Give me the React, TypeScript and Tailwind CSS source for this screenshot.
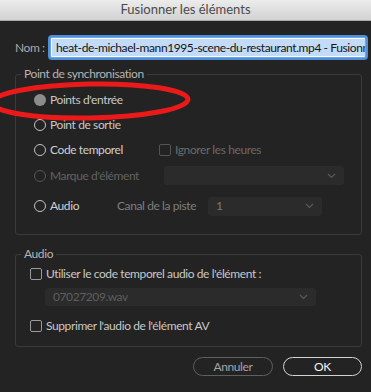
import { FC, ReactNode } from 'react';

const font = { fontFamily: 'Lato, "Open Sans", sans-serif', letterSpacing: '-0.4px' };

const Radio: FC<{ checked?: boolean; disabled?: boolean }> = ({ checked, disabled }) =>
  checked ? (
    <span className="w-[12px] h-[12px] rounded-full bg-[#8c8c8c] shrink-0" />
  ) : (
    <span
      className={`w-[12px] h-[12px] rounded-full border-[1.5px] shrink-0 ${
        disabled ? 'border-[#555555]' : 'border-[#c4c4c4]'
      }`}
    />
  );

const Checkbox: FC<{ disabled?: boolean }> = ({ disabled }) => (
  <span
    className={`w-[12px] h-[12px] rounded-[2px] border-[1.5px] shrink-0 ${
      disabled ? 'border-[#545454]' : 'border-[#9a9a9a]'
    }`}
  />
);

const Chevron: FC<{ color: string }> = ({ color }) => (
  <svg width="9" height="6" viewBox="0 0 9 6" fill="none">
    <path d="M1 1l3.5 3.5L8 1" stroke={color} strokeWidth="1.2" />
  </svg>
);

const Select: FC<{ className: string; value?: string; dim?: boolean }> = ({ className, value, dim }) => (
  <div className={`flex items-center justify-between rounded-[3px] bg-[#2b2b2b] px-[8px] ${className}`}>
    <span className={`text-[12px] ${dim ? 'text-[#5e5e5e]' : 'text-[#7a7a7a]'}`}>{value}</span>
    <Chevron color="#5a5a5a" />
  </div>
);

const Group: FC<{ legend: string; className?: string; children: ReactNode }> = ({ legend, className, children }) => (
  <fieldset className={`border border-[#3a3a3a] rounded-[3px] ml-[15px] mr-[9px] ${className ?? ''}`}>
    <legend className="ml-[5px] px-[3px] text-[12px] leading-[16px] text-[#b4b4b4]">{legend}</legend>
    {children}
  </fieldset>
);

const App: FC = () => {
  return (
    <div className="relative w-[371px] h-[392px] bg-[#232323] overflow-hidden" style={font}>
      {/* Title bar */}
      <div className="h-[21px] flex items-center justify-center bg-gradient-to-b from-[#ececec] to-[#d2d2d2] border-b border-[#a9a9a9] text-[13px] text-[#4a4a4a] tracking-normal">
        Fusionner les éléments
      </div>

      {/* Name */}
      <div className="flex items-center mt-[16px] pl-[15px] pr-[5px]">
        <span className="text-[12px] text-[#a9a9a9] w-[35px]">Nom :</span>
        <div className="flex-1 min-w-0 h-[21px] rounded-[2px] border border-[#6aa6ea] shadow-[0_0_0_2px_#4f8fd9] bg-white overflow-hidden flex items-center pl-[1px]">
          <span className="whitespace-nowrap bg-[#c3dbf7] text-[12px] text-[#151515] px-[4px] leading-[17px]">
            heat-de-michael-mann1995-scene-du-restaurant.mp4 - Fusionné
          </span>
        </div>
      </div>

      {/* Point de synchronisation */}
      <Group legend="Point de synchronisation" className="mt-[8px]">
        <div className="pt-[5px] pb-[14px] pl-[18px]">
          <div className="h-[25px] flex items-center gap-[4px]">
            <Radio checked />
            <span className="text-[12px] text-[#c8c8c8]">Points d'entrée</span>
          </div>
          <div className="h-[25px] flex items-center gap-[4px]">
            <Radio />
            <span className="text-[12px] text-[#c8c8c8]">Point de sortie</span>
          </div>
          <div className="h-[25px] flex items-center">
            <div className="w-[125px] flex items-center gap-[4px]">
              <Radio />
              <span className="text-[12px] text-[#d0d0d0]">Code temporel</span>
            </div>
            <Checkbox disabled />
            <span className="ml-[4px] text-[12px] text-[#6a6a6a]">Ignorer les heures</span>
          </div>
          <div className="h-[27px] flex items-center">
            <div className="w-[130px] flex items-center gap-[4px]">
              <Radio disabled />
              <span className="text-[12px] text-[#626262]">Marque d'élément</span>
            </div>
            <Select className="w-[180px] h-[19px]" />
          </div>
          <div className="mt-[3px] h-[28px] flex items-center">
            <div className="w-[83px] flex items-center gap-[4px]">
              <Radio />
              <span className="text-[12px] text-[#d0d0d0]">Audio</span>
            </div>
            <span className="w-[91px] text-[12px] text-[#7e7e7e]">Canal de la piste</span>
            <Select className="w-[114px] h-[19px]" value="1" />
          </div>
        </div>
      </Group>

      {/* Audio */}
      <Group legend="Audio" className="mt-[11px]">
        <div className="pb-[8px] pl-[14px]">
          <div className="h-[24px] flex items-center gap-[4px]">
            <Checkbox />
            <span className="text-[12px] text-[#c8c8c8]">Utiliser le code temporel audio de l'élément :</span>
          </div>
          <div className="mt-[2px] ml-[15px]">
            <Select className="w-[271px] h-[18px]" value="07027209.wav" dim />
          </div>
          <div className="mt-[8px] h-[24px] flex items-center gap-[4px]">
            <Checkbox />
            <span className="text-[12px] text-[#c8c8c8]">Supprimer l'audio de l'élément AV</span>
          </div>
        </div>
      </Group>

      {/* Buttons */}
      <div className="flex justify-end gap-[10px] mt-[10px] pr-[9px]">
        <button className="w-[80px] h-[19px] rounded-full border-[1.5px] border-[#5f5f5f] text-[12px] leading-none text-[#a3a3a3]">
          Annuler
        </button>
        <button className="w-[79px] h-[19px] rounded-full border-[1.5px] border-[#d4d4d4] text-[12px] leading-none text-[#f2f2f2]">
          OK
        </button>
      </div>

      {/* Red annotation */}
      <svg className="absolute left-0 top-0 pointer-events-none" width="371" height="392">
        <ellipse cx="90" cy="101" rx="98" ry="17" transform="rotate(-1 90 101)" fill="none" stroke="#ea1a1a" strokeWidth="5" />
      </svg>
    </div>
  );
};

export default App;
